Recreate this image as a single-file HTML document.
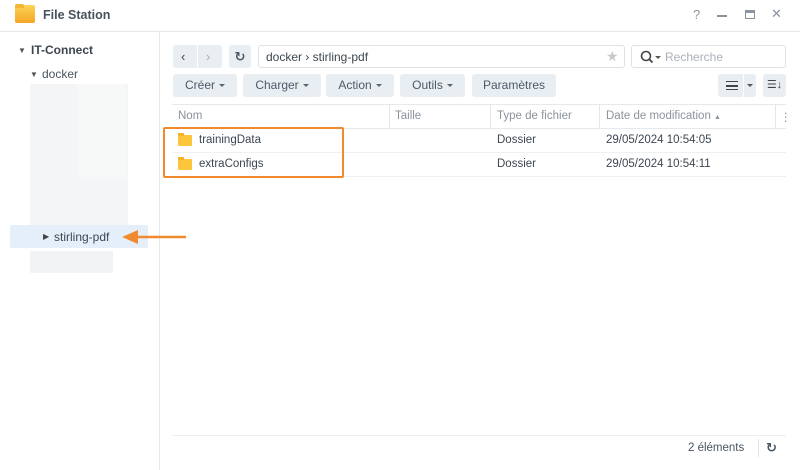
<!DOCTYPE html>
<html><head><meta charset="utf-8"><style>
*{box-sizing:border-box;margin:0;padding:0}
body{width:800px;height:470px;background:#fff;font-family:"Liberation Sans","DejaVu Sans",sans-serif;position:relative;overflow:hidden;color:#4a5560;font-size:12px}
.a{position:absolute}
.btn{position:absolute;background:#e9eef2;border-radius:3px;height:23px;line-height:23px;text-align:center;font-size:12px;color:#4c5a67}
.caret{display:inline-block;width:0;height:0;border-left:3px solid transparent;border-right:3px solid transparent;border-top:3px solid #5a6670;vertical-align:middle;margin-left:4px}
.hd{position:absolute;top:110px;font-size:11.5px;color:#8a939c}
.sep{position:absolute;top:104px;height:24px;width:1px;background:#e3e7ea}
.cell{position:absolute;font-size:11.5px;color:#3c4650}
</style></head><body>
<div class="a" style="left:15px;top:5px;width:20px;height:18px;background:linear-gradient(#fcd35a,#f5a623);border-radius:2px"></div>
<div class="a" style="left:15px;top:4px;width:9px;height:4px;background:#f2b632;border-radius:2px 2px 0 0"></div>
<div class="a" style="left:43px;top:8px;font-weight:bold;font-size:12.5px;color:#47525c">File Station</div>
<div class="a" style="left:693px;top:7px;font-size:13px;color:#8b949c">?</div>
<div class="a" style="left:717px;top:15px;width:10px;height:1.5px;background:#8b949c"></div>
<div class="a" style="left:745px;top:10px;width:10px;height:9px;border:1.5px solid #8b949c;border-top-width:3px"></div>
<div class="a" style="left:771px;top:6px;font-size:13px;color:#8b949c">✕</div>
<div class="a" style="left:0;top:31px;width:800px;height:1px;background:#e6e9ec"></div>
<div class="a" style="left:159px;top:32px;width:1px;height:438px;background:#e6e9ec"></div>
<div class="a" style="left:18px;top:46px;font-size:8px;color:#555">▼</div>
<div class="a" style="left:31px;top:43px;font-weight:bold;font-size:12px;color:#3c4650">IT-Connect</div>
<div class="a" style="left:30px;top:70px;font-size:8px;color:#555">▼</div>
<div class="a" style="left:42px;top:67px;font-size:12px;color:#4a5560">docker</div>
<div class="a" style="left:30px;top:84px;width:98px;height:142px;background:#f4f5f6"></div>
<div class="a" style="left:78px;top:84px;width:48px;height:95px;background:#f7f8f8"></div>
<div class="a" style="left:10px;top:225px;width:138px;height:23px;background:#e4eff9;border-radius:2px"></div>
<div class="a" style="left:43px;top:232px;font-size:8px;color:#444">▶</div>
<div class="a" style="left:54px;top:230px;font-size:12px;color:#3c4650">stirling-pdf</div>
<div class="a" style="left:30px;top:251px;width:83px;height:22px;background:#f2f3f4"></div>
<svg class="a" style="left:120px;top:229px" width="68" height="16"><line x1="12" y1="8" x2="66" y2="8" stroke="#f08a2e" stroke-width="2.5"/><polygon points="2,8 18,1 18,15" fill="#f08a2e"/></svg>
<div class="btn" style="left:173px;top:45px;width:49px"></div>
<div class="a" style="left:197px;top:45px;width:1px;height:23px;background:#fff"></div>
<div class="a" style="left:181px;top:49px;font-size:13px;color:#444">‹</div>
<div class="a" style="left:206px;top:49px;font-size:13px;color:#aaa">›</div>
<div class="btn" style="left:229px;top:45px;width:22px;font-size:13px;font-weight:bold">↻</div>
<div class="a" style="left:258px;top:45px;width:367px;height:23px;border:1px solid #dde2e6;border-radius:3px"></div>
<div class="a" style="left:266px;top:50px;font-size:12px;color:#3c4650">docker › stirling-pdf</div>
<div class="a" style="left:606px;top:48px;font-size:14px;color:#c5c9cd">★</div>
<div class="a" style="left:631px;top:45px;width:155px;height:23px;border:1px solid #dde2e6;border-radius:3px"></div>
<svg class="a" style="left:640px;top:50px" width="14" height="14"><circle cx="6" cy="6" r="4.5" fill="none" stroke="#444" stroke-width="1.6"/><line x1="9" y1="9" x2="12.5" y2="12.5" stroke="#444" stroke-width="1.8"/></svg>
<div class="a" style="left:655px;top:56px;border-left:3px solid transparent;border-right:3px solid transparent;border-top:3px solid #555"></div>
<div class="a" style="left:665px;top:50px;font-size:12px;color:#aab1b8">Recherche</div>
<div class="btn" style="left:173px;top:74px;width:64px">Créer<span class="caret"></span></div>
<div class="btn" style="left:243px;top:74px;width:78px">Charger<span class="caret"></span></div>
<div class="btn" style="left:326px;top:74px;width:68px">Action<span class="caret"></span></div>
<div class="btn" style="left:400px;top:74px;width:65px">Outils<span class="caret"></span></div>
<div class="btn" style="left:472px;top:74px;width:84px">Paramètres</div>
<div class="btn" style="left:718px;top:74px;width:38px"></div>
<div class="a" style="left:743px;top:74px;width:1px;height:23px;background:#fff"></div>
<div class="a" style="left:726px;top:81px;width:12px;height:9px;border-top:1.5px solid #444;border-bottom:1.5px solid #444"></div>
<div class="a" style="left:726px;top:85px;width:12px;height:1.5px;background:#444"></div>
<div class="a" style="left:747px;top:84px;border-left:3px solid transparent;border-right:3px solid transparent;border-top:3px solid #555"></div>
<div class="btn" style="left:763px;top:74px;width:23px;font-size:11px;color:#444">☰↓</div>
<div class="a" style="left:172px;top:104px;width:614px;height:1px;background:#e6e9ec"></div>
<div class="a" style="left:172px;top:128px;width:614px;height:1px;background:#e6e9ec"></div>
<div class="hd" style="left:178px">Nom</div>
<div class="sep" style="left:389px"></div><div class="hd" style="left:395px">Taille</div>
<div class="sep" style="left:490px"></div><div class="hd" style="left:497px">Type de fichier</div>
<div class="sep" style="left:599px"></div><div class="hd" style="left:606px">Date de modification <span style="font-size:7px">▲</span></div>
<div class="sep" style="left:775px"></div><div class="hd" style="left:780px">⋮</div>
<div class="a" style="left:172px;top:152px;width:614px;height:1px;background:#eef0f2"></div>
<div class="a" style="left:172px;top:176px;width:614px;height:1px;background:#eef0f2"></div>
<div class="a" style="left:178px;top:135px;width:14px;height:11px;background:#fbc63c;border-radius:1px"></div>
<div class="a" style="left:178px;top:133px;width:6px;height:3px;background:#f5b52a"></div>
<div class="cell" style="left:199px;top:134px">trainingData</div>
<div class="cell" style="left:497px;top:134px">Dossier</div>
<div class="cell" style="left:606px;top:134px">29/05/2024 10:54:05</div>
<div class="a" style="left:178px;top:159px;width:14px;height:11px;background:#fbc63c;border-radius:1px"></div>
<div class="a" style="left:178px;top:157px;width:6px;height:3px;background:#f5b52a"></div>
<div class="cell" style="left:199px;top:158px">extraConfigs</div>
<div class="cell" style="left:497px;top:158px">Dossier</div>
<div class="cell" style="left:606px;top:158px">29/05/2024 10:54:11</div>
<div class="a" style="left:163px;top:127px;width:181px;height:51px;border:2.5px solid #f08a2e;border-radius:2px"></div>
<div class="a" style="left:172px;top:435px;width:614px;height:1px;background:#eceff1"></div>
<div class="a" style="left:688px;top:442px;font-size:11.5px;color:#4a5560">2 éléments</div>
<div class="a" style="left:758px;top:439px;width:1px;height:18px;background:#e3e7ea"></div>
<div class="a" style="left:766px;top:440px;font-size:13px;font-weight:bold;color:#4a5560">↻</div>
</body></html>
